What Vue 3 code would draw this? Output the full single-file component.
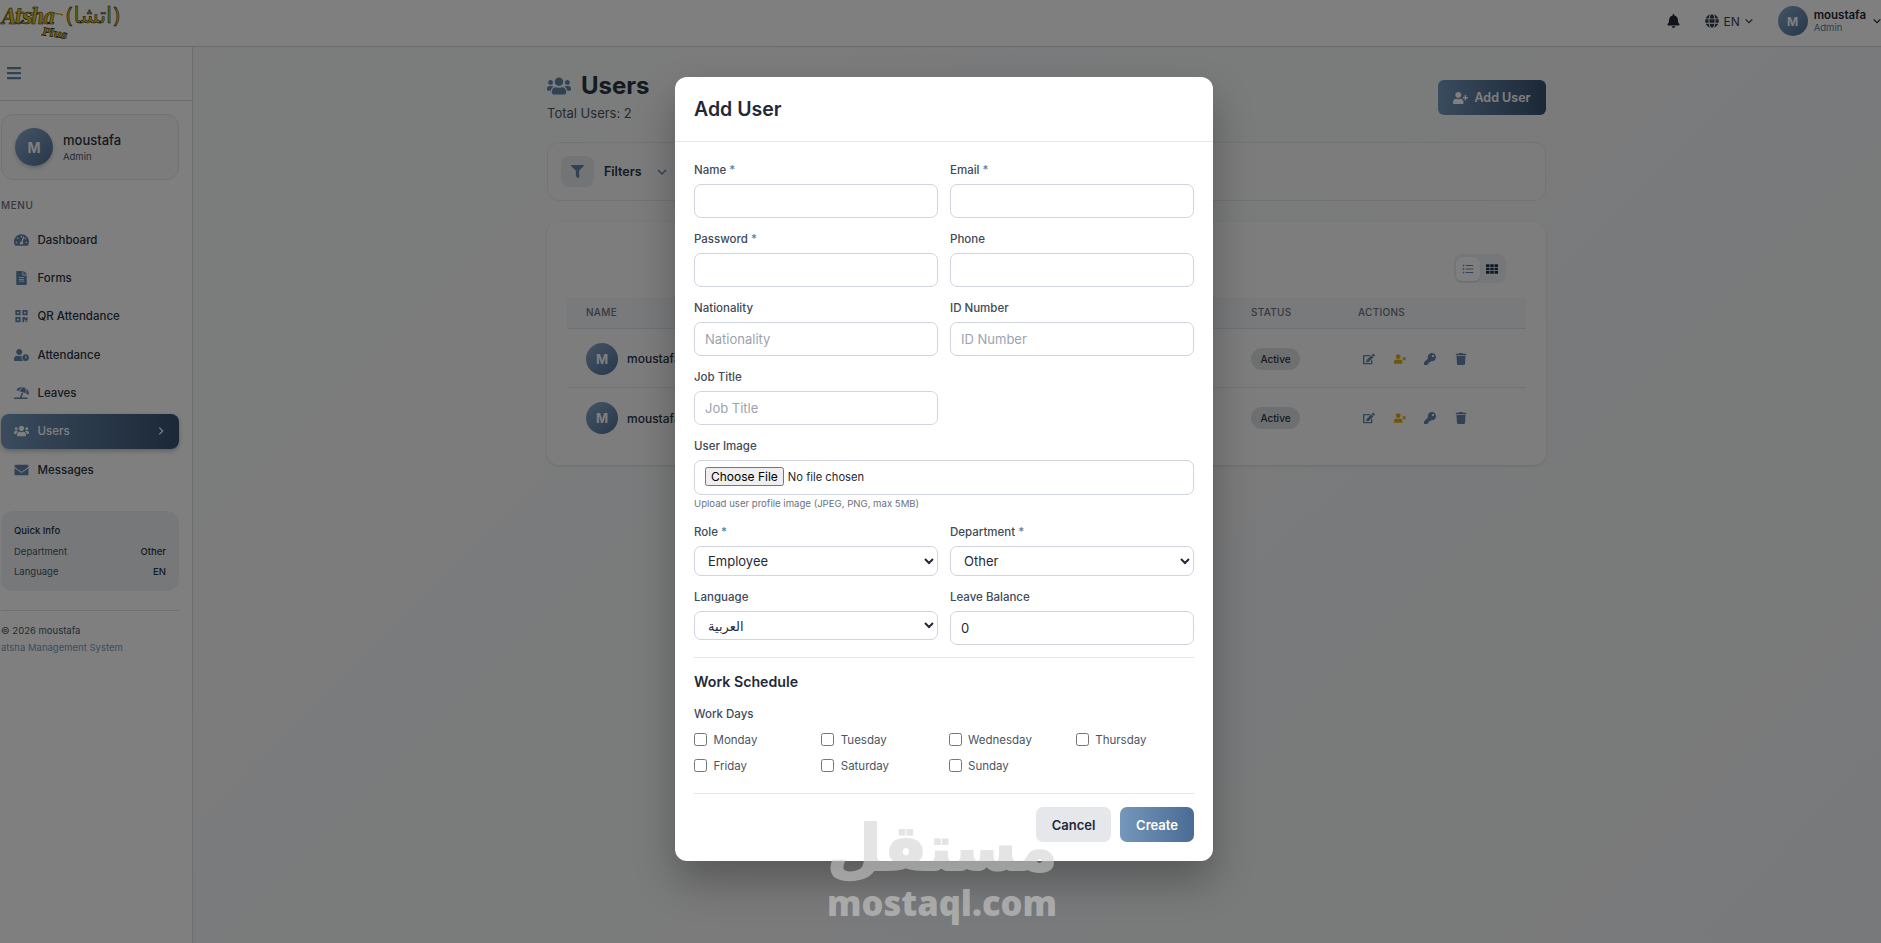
<script setup>
// icon paths: [viewBox width, d]
const icons = {
  bars: [448, 'M16 132h416c8.837 0 16-7.163 16-16V76c0-8.837-7.163-16-16-16H16C7.163 60 0 67.163 0 76v40c0 8.837 7.163 16 16 16zm0 160h416c8.837 0 16-7.163 16-16v-40c0-8.837-7.163-16-16-16H16c-8.837 0-16 7.163-16 16v40c0 8.837 7.163 16 16 16zm0 160h416c8.837 0 16-7.163 16-16v-40c0-8.837-7.163-16-16-16H16c-8.837 0-16 7.163-16 16v40c0 8.837 7.163 16 16 16z'],
  dashboard: [576, 'M288 32C128.94 32 0 160.94 0 320c0 52.8 14.25 102.26 39.06 144.8 5.61 9.62 16.3 15.2 27.44 15.2h443c11.14 0 21.83-5.58 27.44-15.2C561.75 422.26 576 372.8 576 320c0-159.06-128.94-288-288-288zm0 64c14.71 0 26.58 10.13 30.32 23.65-1.11 2.26-2.64 4.23-3.45 6.67l-9.22 27.67c-5.13 3.49-10.97 6.01-17.64 6.01-17.67 0-32-14.33-32-32S270.33 96 288 96zM96 384c-17.67 0-32-14.33-32-32s14.33-32 32-32 32 14.33 32 32-14.33 32-32 32zm48-160c-17.67 0-32-14.33-32-32s14.33-32 32-32 32 14.33 32 32-14.33 32-32 32zm246.77-72.41l-61.33 184C343.13 347.33 352 364.54 352 384c0 11.72-3.38 22.55-8.88 32H232.88c-5.5-9.45-8.88-20.28-8.88-32 0-33.94 26.5-61.43 59.9-63.59l61.34-184.01c4.17-12.56 17.73-19.45 30.36-15.17 12.57 4.19 19.35 17.79 15.17 30.36zm14.66 57.2l15.52-46.55c3.47-1.29 7.13-2.23 11.05-2.23 17.67 0 32 14.33 32 32s-14.33 32-32 32c-11.38-.01-20.89-6.28-26.57-15.22zM480 384c-17.67 0-32-14.33-32-32s14.33-32 32-32 32 14.33 32 32-14.33 32-32 32z'],
  file: [384, 'M224 136V0H24C10.7 0 0 10.7 0 24v464c0 13.3 10.7 24 24 24h336c13.3 0 24-10.7 24-24V160H248c-13.2 0-24-10.8-24-24zm64 236c0 6.6-5.4 12-12 12H108c-6.6 0-12-5.4-12-12v-8c0-6.6 5.4-12 12-12h168c6.6 0 12 5.4 12 12v8zm0-64c0 6.6-5.4 12-12 12H108c-6.6 0-12-5.4-12-12v-8c0-6.6 5.4-12 12-12h168c6.6 0 12 5.4 12 12v8zm0-72v8c0 6.6-5.4 12-12 12H108c-6.6 0-12-5.4-12-12v-8c0-6.6 5.4-12 12-12h168c6.6 0 12 5.4 12 12zm96-114.1v6.1H256V0h6.1c6.4 0 12.5 2.5 17 7l97.9 98c4.5 4.5 7 10.6 7 16.9z'],
  qrcode: [448, 'M0 224h192V32H0v192zM64 96h64v64H64V96zm192-64v192h192V32H256zm128 128h-64V96h64v64zM0 480h192V288H0v192zm64-128h64v64H64v-64zm352-64h32v128h-96v-32h-32v96h-64V288h96v32h64v-32zm0 160h32v32h-32v-32zm-64 0h32v32h-32v-32z'],
  userClock: [640, 'M496 224c-79.6 0-144 64.4-144 144s64.4 144 144 144 144-64.4 144-144-64.4-144-144-144zm64 150.3c0 5.3-4.4 9.7-9.7 9.7h-60.6c-5.3 0-9.7-4.4-9.7-9.7v-76.6c0-5.3 4.4-9.7 9.7-9.7h12.6c5.3 0 9.7 4.4 9.7 9.7V352h38.3c5.3 0 9.7 4.4 9.7 9.7v12.6zM320 368c0-27.8 6.7-54.1 18.2-77.5-8-1.5-16.2-2.5-24.6-2.5h-16.7c-22.2 10.2-46.9 16-72.9 16s-50.6-5.8-72.9-16h-16.7C60.2 288 0 348.2 0 422.4V464c0 26.5 21.5 48 48 48h347.1c-45.3-31.9-75.1-84.5-75.1-144zm-96-112c70.7 0 128-57.3 128-128S294.7 0 224 0 96 57.3 96 128s57.3 128 128 128z'],
  beach: [640, 'M115.38 136.9l102.11 37.18c35.19-81.54 86.21-144.29 139-173.7-95.88-4.89-188.78 36.96-248.53 111.8-6.69 8.4-2.66 21.05 7.42 24.72zm132.25 48.16l238.48 86.83c35.76-121.38 18.7-231.66-42.63-253.98-7.4-2.7-15.13-4-23.09-4-58.02.01-128.27 69.17-172.76 171.15zM521.48 60.5c6.22 16.3 10.83 34.6 13.2 55.19 5.74 49.89-1.42 108.23-18.95 166.98l102.62 37.36c10.09 3.67 21.31-3.43 21.57-14.17 2.32-95.69-41.91-187.44-118.44-245.36zM560 447.98H321.06L386 269.5l-60.14-21.9-72.9 200.37H16c-8.84 0-16 7.16-16 16.01v32.01C0 504.83 7.16 512 16 512h544c8.84 0 16-7.17 16-16.01v-32.01c0-8.84-7.16-16-16-16z'],
  users: [640, 'M96 224c35.3 0 64-28.7 64-64s-28.7-64-64-64-64 28.7-64 64 28.7 64 64 64zm448 0c35.3 0 64-28.7 64-64s-28.7-64-64-64-64 28.7-64 64 28.7 64 64 64zm32 32h-64c-17.6 0-33.5 7.1-45.1 18.6 40.3 22.1 68.9 62 75.1 109.4h66c17.7 0 32-14.3 32-32v-32c0-35.3-28.7-64-64-64zm-256 0c61.9 0 112-50.1 112-112S381.9 32 320 32 208 82.1 208 144s50.1 112 112 112zm76.8 32h-8.3c-20.8 10-43.9 16-68.5 16s-47.6-6-68.5-16h-8.3C179.6 288 128 339.6 128 403.2V432c0 26.5 21.5 48 48 48h288c26.5 0 48-21.5 48-48v-28.8c0-63.6-51.6-115.2-115.2-115.2zm-223.7-13.4C161.5 263.1 145.6 256 128 256H64c-35.3 0-64 28.7-64 64v32c0 17.7 14.3 32 32 32h65.9c6.3-47.4 34.9-87.3 75.2-109.4z'],
  envelope: [512, 'M502.3 190.8c3.9-3.1 9.7-.2 9.7 4.7V400c0 26.5-21.5 48-48 48H48c-26.5 0-48-21.5-48-48V195.6c0-5 5.7-7.8 9.7-4.7 22.4 17.4 52.1 39.5 154.1 113.6 21.1 15.4 56.7 47.8 92.2 47.6 35.7.3 72-32.8 92.3-47.6 102-74.1 131.6-96.3 154-113.7zM256 320c23.2.4 56.6-29.2 73.4-41.4 132.7-96.3 142.8-104.7 173.4-128.7 5.8-4.5 9.2-11.5 9.2-18.9v-19c0-26.5-21.5-48-48-48H48C21.5 64 0 85.5 0 112v19c0 7.4 3.4 14.3 9.2 18.9 30.6 23.9 40.7 32.4 173.4 128.7 16.8 12.2 50.2 41.8 73.4 41.4z'],
  bell: [448, 'M224 512c35.32 0 63.97-28.65 63.97-64H160.03c0 35.35 28.65 64 63.97 64zm215.39-149.71c-19.32-20.76-55.47-51.99-55.47-154.29 0-77.7-54.48-139.9-127.94-155.16V32c0-17.67-14.32-32-31.98-32s-31.98 14.33-31.98 32v20.84C118.56 68.1 64.08 130.3 64.08 208c0 102.3-36.15 133.53-55.47 154.29-6 6.45-8.66 14.16-8.61 21.71.11 16.4 12.98 32 32.1 32h383.8c19.12 0 32-15.6 32.1-32 .05-7.55-2.61-15.27-8.61-21.71z'],
  globe: [496, 'M336.5 160C322 70.7 287.8 8 248 8s-74 62.7-88.5 152h177zM152 256c0 22.2 1.2 43.5 3.3 64h185.3c2.1-20.5 3.3-41.8 3.3-64s-1.2-43.5-3.3-64H155.3c-2.1 20.5-3.3 41.8-3.3 64zm324.7-96c-28.6-67.9-86.5-120.4-158-141.6 24.4 33.8 41.2 84.7 50 141.6h108zM177.2 18.4C105.8 39.6 47.8 92.1 19.3 160h108c8.7-56.9 25.5-107.8 49.9-141.6zM487.4 192H372.7c2.1 21 3.3 42.5 3.3 64s-1.2 43-3.3 64h114.6c5.5-20.5 8.6-41.8 8.6-64s-3.1-43.5-8.5-64zM120 256c0-21.5 1.2-43 3.3-64H8.6C3.2 212.5 0 233.8 0 256s3.2 43.5 8.6 64h114.6c-2-21-3.2-42.5-3.2-64zm39.5 96c14.5 89.3 48.7 152 88.5 152s74-62.7 88.5-152h-177zm159.3 141.6c71.4-21.2 129.4-73.7 158-141.6h-108c-8.8 56.9-25.6 107.8-50 141.6zM19.3 352c28.6 67.9 86.5 120.4 158 141.6-24.4-33.8-41.2-84.7-50-141.6h-108z'],
  filter: [512, 'M487.976 0H24.028C2.71 0-8.047 25.866 7.058 40.971L192 225.941V432c0 7.831 3.821 15.17 10.237 19.662l80 55.98C298.02 518.69 320 507.493 320 487.98V225.941l184.947-184.97C520.021 25.896 509.338 0 487.976 0z'],
  list: [512, 'M32 72h64v64H32zM32 224h64v64H32zM32 376h64v64H32zM160 84h320v40H160zM160 236h320v40H160zM160 388h320v40H160z'],
  grid: [512, 'M0 56h150v112H0zM181 56h150v112H181zM362 56h150v112H362zM0 200h150v112H0zM181 200h150v112H181zM362 200h150v112H362zM0 344h150v112H0zM181 344h150v112H181zM362 344h150v112H362z'],
  edit: [576, 'M402.6 83.2l90.2 90.2c3.8 3.8 3.8 10 0 13.8L274.4 405.6l-92.8 10.3c-12.4 1.4-22.9-9.1-21.5-21.5l10.3-92.8L388.8 83.2c3.8-3.8 10-3.8 13.8 0zm162-22.9l-48.8-48.8c-15.2-15.2-39.9-15.2-55.2 0l-35.4 35.4c-3.8 3.8-3.8 10 0 13.8l90.2 90.2c3.8 3.8 10 3.8 13.8 0l35.4-35.4c15.2-15.3 15.2-40 0-55.2zM384 346.2V448H64V128h229.8c3.2 0 6.2-1.3 8.5-3.5l40-40c7.6-7.6 2.2-20.5-8.5-20.5H48C21.5 64 0 85.5 0 112v352c0 26.5 21.5 48 48 48h352c26.5 0 48-21.5 48-48V306.2c0-10.7-12.9-16-20.5-8.5l-40 40c-2.2 2.3-3.5 5.3-3.5 8.5z'],
  userTimes: [640, 'M589.6 240l45.6-45.6c6.3-6.3 6.3-16.5 0-22.8l-22.8-22.8c-6.3-6.3-16.5-6.3-22.8 0L544 194.4l-45.6-45.6c-6.3-6.3-16.5-6.3-22.8 0l-22.8 22.8c-6.3 6.3-6.3 16.5 0 22.8l45.6 45.6-45.6 45.6c-6.3 6.3-6.3 16.5 0 22.8l22.8 22.8c6.3 6.3 16.5 6.3 22.8 0l45.6-45.6 45.6 45.6c6.3 6.3 16.5 6.3 22.8 0l22.8-22.8c6.3-6.3 6.3-16.5 0-22.8L589.6 240zM224 256c70.7 0 128-57.3 128-128S294.7 0 224 0 96 57.3 96 128s57.3 128 128 128zm89.6 32h-16.7c-22.2 10.2-46.9 16-72.9 16s-50.6-5.8-72.9-16h-16.7C60.2 288 0 348.2 0 422.4V464c0 26.5 21.5 48 48 48h352c26.5 0 48-21.5 48-48v-41.6c0-74.2-60.2-134.4-134.4-134.4z'],
  userPlus: [640, 'M624 208h-64v-64c0-8.8-7.2-16-16-16h-32c-8.8 0-16 7.2-16 16v64h-64c-8.8 0-16 7.2-16 16v32c0 8.8 7.2 16 16 16h64v64c0 8.8 7.2 16 16 16h32c8.8 0 16-7.2 16-16v-64h64c8.8 0 16-7.2 16-16v-32c0-8.8-7.2-16-16-16zm-400 48c70.7 0 128-57.3 128-128S294.7 0 224 0 96 57.3 96 128s57.3 128 128 128zm89.6 32h-16.7c-22.2 10.2-46.9 16-72.9 16s-50.6-5.8-72.9-16h-16.7C60.2 288 0 348.2 0 422.4V464c0 26.5 21.5 48 48 48h352c26.5 0 48-21.5 48-48v-41.6c0-74.2-60.2-134.4-134.4-134.4z'],
  key: [512, 'M512 176.001C512 273.203 433.202 352 336 352c-11.22 0-22.19-1.062-32.827-3.069l-24.012 27.014A23.999 23.999 0 0 1 261.223 384H224v40c0 13.255-10.745 24-24 24h-40v40c0 13.255-10.745 24-24 24H24c-13.255 0-24-10.745-24-24v-78.059c0-6.365 2.529-12.47 7.029-16.971l161.802-161.802C163.108 213.814 160 195.271 160 176 160 78.798 238.797.001 335.999 0 433.488-.001 512 78.511 512 176.001zM336 128c0 26.51 21.49 48 48 48s48-21.49 48-48-21.49-48-48-48-48 21.49-48 48z'],
  trash: [448, 'M432 32H312l-9.4-18.7A24 24 0 0 0 281.1 0H166.8a23.72 23.72 0 0 0-21.4 13.3L136 32H16A16 16 0 0 0 0 48v32a16 16 0 0 0 16 16h416a16 16 0 0 0 16-16V48a16 16 0 0 0-16-16zM53.2 467a48 48 0 0 0 47.9 45h245.8a48 48 0 0 0 47.9-45L416 128H32z']
}

const menu = [
  { label: 'Dashboard', icon: 'dashboard' },
  { label: 'Forms', icon: 'file' },
  { label: 'QR Attendance', icon: 'qrcode' },
  { label: 'Attendance', icon: 'userClock' },
  { label: 'Leaves', icon: 'beach' },
  { label: 'Users', icon: 'users', active: true },
  { label: 'Messages', icon: 'envelope' }
]

const rows = [1, 2]
const rowActions = [
  { icon: 'edit', cls: 'a-blue' },
  { icon: 'userTimes', cls: 'a-gold' },
  { icon: 'key', cls: 'a-blue' },
  { icon: 'trash', cls: 'a-blue' }
]

const days = ['Monday', 'Tuesday', 'Wednesday', 'Thursday', 'Friday', 'Saturday', 'Sunday']
</script>

<template>
  <div class="page">
    <header class="topbar">
      <div class="logo">
        <span class="logo-latin">Atsha</span>
        <svg class="logo-flourish" viewBox="0 0 20 6"><path d="M1 4c5-3 12-3 18-1" /></svg>
        <span class="logo-plus">Plus</span>
        <span class="logo-ar">(اتشا)</span>
      </div>
      <div class="top-right">
        <svg class="ic bell" :viewBox="`0 0 ${icons.bell[0]} 512`"><path :d="icons.bell[1]" /></svg>
        <div class="lang">
          <svg class="ic globe" :viewBox="`0 0 ${icons.globe[0]} 512`"><path :d="icons.globe[1]" /></svg>
          <span>EN</span>
          <svg class="chev" viewBox="0 0 12 12"><path d="M2 4l4 4 4-4" /></svg>
        </div>
        <div class="top-user">
          <div class="avatar avatar-top">M</div>
          <div class="top-user-text">
            <div class="top-name">moustafa</div>
            <div class="top-role">Admin</div>
          </div>
          <svg class="chev" viewBox="0 0 12 12"><path d="M2 4l4 4 4-4" /></svg>
        </div>
      </div>
    </header>

    <div class="layout">
      <aside class="sidebar">
        <div class="side-top">
          <svg class="ic burger" :viewBox="`0 0 ${icons.bars[0]} 512`"><path :d="icons.bars[1]" /></svg>
        </div>
        <div class="side-inner">
          <div class="user-card">
            <div class="avatar avatar-card">M</div>
            <div>
              <div class="card-name">moustafa</div>
              <div class="card-role">Admin</div>
            </div>
          </div>
          <div class="menu-title">MENU</div>
          <nav class="menu">
            <div v-for="item in menu" :key="item.label" class="menu-item" :class="{ active: item.active }">
              <span class="menu-icon">
                <svg class="ic" :viewBox="`0 0 ${icons[item.icon][0]} 512`"><path :d="icons[item.icon][1]" /></svg>
              </span>
              <span class="menu-label">{{ item.label }}</span>
              <svg v-if="item.active" class="chev-right" viewBox="0 0 12 12"><path d="M4 2l4 4-4 4" /></svg>
            </div>
          </nav>
          <div class="quick">
            <div class="quick-title">Quick Info</div>
            <div class="quick-row"><span>Department</span><b>Other</b></div>
            <div class="quick-row"><span>Language</span><b>EN</b></div>
          </div>
          <div class="side-foot">
            <div class="copy">© 2026 moustafa</div>
            <div class="system">atsha Management System</div>
          </div>
        </div>
      </aside>

      <main class="main">
        <div class="content">
          <div class="page-head">
            <div>
              <h1 class="page-title">
                <svg class="ic" :viewBox="`0 0 ${icons.users[0]} 512`"><path :d="icons.users[1]" /></svg>
                Users
              </h1>
              <div class="page-sub">Total Users: 2</div>
            </div>
            <button class="add-btn">
              <svg class="ic" :viewBox="`0 0 ${icons.userPlus[0]} 512`"><path :d="icons.userPlus[1]" /></svg>
              Add User
            </button>
          </div>

          <section class="filter-card">
            <span class="filter-box">
              <svg class="ic" :viewBox="`0 0 ${icons.filter[0]} 512`"><path :d="icons.filter[1]" /></svg>
            </span>
            <span class="filter-label">Filters</span>
            <svg class="chev" viewBox="0 0 12 12"><path d="M2 4l4 4 4-4" /></svg>
          </section>

          <section class="table-card">
            <div class="toggle-row">
              <div class="toggle">
                <span class="toggle-btn on">
                  <svg class="ic" viewBox="0 0 512 512"><path :d="icons.list[1]" /></svg>
                </span>
                <span class="toggle-btn">
                  <svg class="ic" viewBox="0 0 512 512"><path :d="icons.grid[1]" /></svg>
                </span>
              </div>
            </div>
            <div class="t-head t-grid">
              <span>NAME</span>
              <span>STATUS</span>
              <span>ACTIONS</span>
            </div>
            <div v-for="r in rows" :key="r" class="t-row t-grid">
              <div class="t-user">
                <div class="avatar avatar-row">M</div>
                <span>moustafa</span>
              </div>
              <div><span class="badge">Active</span></div>
              <div class="t-actions">
                <span v-for="a in rowActions" :key="a.icon" class="t-action" :class="a.cls">
                  <svg class="ic" :viewBox="`0 0 ${icons[a.icon][0]} 512`"><path :d="icons[a.icon][1]" /></svg>
                </span>
              </div>
            </div>
          </section>
        </div>
      </main>
    </div>

    <div class="overlay">
      <div class="modal">
        <div class="modal-head">
          <h2>Add User</h2>
        </div>
        <form class="modal-body" @submit.prevent>
          <div class="two">
            <div class="field">
              <label>Name <i>*</i></label>
              <input type="text" />
            </div>
            <div class="field">
              <label>Email <i>*</i></label>
              <input type="email" />
            </div>
            <div class="field">
              <label>Password <i>*</i></label>
              <input type="password" />
            </div>
            <div class="field">
              <label>Phone</label>
              <input type="text" />
            </div>
            <div class="field">
              <label>Nationality</label>
              <input type="text" placeholder="Nationality" />
            </div>
            <div class="field">
              <label>ID Number</label>
              <input type="text" placeholder="ID Number" />
            </div>
            <div class="field">
              <label>Job Title</label>
              <input type="text" placeholder="Job Title" />
            </div>
          </div>

          <div class="field image-field">
            <label>User Image</label>
            <input class="file" type="file" />
            <div class="hint">Upload user profile image (JPEG, PNG, max 5MB)</div>
          </div>

          <div class="two">
            <div class="field">
              <label>Role <i>*</i></label>
              <select><option>Employee</option></select>
            </div>
            <div class="field">
              <label>Department <i>*</i></label>
              <select><option>Other</option></select>
            </div>
            <div class="field">
              <label>Language</label>
              <select class="select-ar"><option>العربية</option></select>
            </div>
            <div class="field">
              <label>Leave Balance</label>
              <input type="number" value="0" />
            </div>
          </div>

          <div class="schedule">
            <h3>Work Schedule</h3>
            <label class="days-label">Work Days</label>
            <div class="days">
              <label v-for="d in days" :key="d" class="day">
                <input type="checkbox" />
                <span>{{ d }}</span>
              </label>
            </div>
          </div>

          <div class="modal-foot">
            <button type="button" class="btn-cancel">Cancel</button>
            <button type="button" class="btn-create">Create</button>
          </div>
        </form>
      </div>
    </div>

    <div class="watermark">
      <div class="wm-ar">مستقل</div>
      <div class="wm-en">mostaql.com</div>
    </div>
  </div>
</template>

<style>
html, body {
  margin: 0;
  background: #f4f6f7;
}
</style>

<style scoped>
.page {
  position: relative;
  width: 1881px;
  height: 943px;
  overflow: hidden;
  font-family: Inter, "Noto Sans", sans-serif;
  color: #2b3442;
  background: #f4f6f7;
}

.ic {
  display: block;
  fill: currentColor;
}

.chev {
  width: 10px;
  height: 10px;
  fill: none;
  stroke: currentColor;
  stroke-width: 1.5;
}

/* top bar */
.topbar {
  height: 46px;
  box-sizing: content-box;
  border-bottom: 1px solid #d4d6da;
  background: #fff;
  display: flex;
  justify-content: space-between;
  align-items: flex-start;
}

.logo {
  position: relative;
  width: 104px;
  height: 44px;
  color: #e4c21c;
  -webkit-text-stroke: 0.5px #14140c;
  font-family: "DejaVu Serif", serif;
  font-style: italic;
  font-weight: 700;
}

.logo-latin {
  position: absolute;
  left: 2px;
  top: 3px;
  font-size: 19px;
  letter-spacing: -1.6px;
  transform: scaleY(1.15);
  transform-origin: left top;
}

.logo-flourish {
  position: absolute;
  left: 44px;
  top: 12px;
  width: 20px;
  height: 6px;
  fill: none;
  stroke: #c9a818;
  stroke-width: 1.6;
}

.logo-plus {
  position: absolute;
  left: 42px;
  top: 27px;
  font-size: 11px;
  letter-spacing: -0.5px;
  transform: rotate(8deg);
}

.logo-ar {
  position: absolute;
  left: 65px;
  top: 1px;
  font-size: 22px;
  line-height: 30px;
  font-family: "DejaVu Sans", sans-serif;
  font-style: normal;
  font-weight: 400;
}

.top-right {
  display: flex;
  align-items: center;
  padding-top: 6px;
  color: #1f2937;
}

.bell {
  width: 13px;
  height: 14px;
  margin-right: 25px;
}

.lang {
  display: flex;
  align-items: center;
  gap: 4px;
  font-size: 12px;
  color: #374151;
  margin-right: 24px;
}

.globe {
  width: 14px;
  height: 14px;
}

.top-user {
  display: flex;
  align-items: center;
}

.top-user .chev {
  margin-left: 6px;
  margin-right: -1px;
}

.avatar {
  border-radius: 50%;
  background: linear-gradient(135deg, #8aa9c9, #4f6e96);
  color: #fff;
  font-weight: 700;
  display: flex;
  align-items: center;
  justify-content: center;
  flex-shrink: 0;
}

.avatar-top {
  width: 30px;
  height: 30px;
  font-size: 12px;
}

.top-user-text {
  margin-left: 6px;
}

.top-name {
  font-size: 11.5px;
  font-weight: 600;
  line-height: 14px;
}

.top-role {
  font-size: 9.5px;
  line-height: 12px;
  color: #5a7ba0;
}

/* sidebar */
.layout {
  display: flex;
  height: 896px;
}

.sidebar {
  width: 192px;
  flex-shrink: 0;
  box-sizing: content-box;
  border-right: 1px solid #d9dce0;
  background: #fff;
  overflow: hidden;
}

.side-top {
  height: 54px;
  border-bottom: 1px solid #d4d6da;
  box-sizing: border-box;
  display: flex;
  align-items: center;
  padding: 0 0 2px 7px;
  color: #6284ab;
}

.burger {
  width: 14px;
  height: 16px;
}

.side-inner {
  padding: 13px 13px 0 1px;
}

.user-card {
  height: 66px;
  box-sizing: border-box;
  border: 1px solid #e2e5ea;
  border-radius: 12px;
  background: #f8f9fb;
  display: flex;
  align-items: center;
  gap: 10px;
  padding-left: 13px;
}

.avatar-card {
  width: 38px;
  height: 38px;
  font-size: 14px;
  box-shadow: 0 2px 4px rgba(0, 0, 0, 0.2);
}

.card-name {
  font-size: 13px;
  font-weight: 500;
  line-height: 18px;
  margin-top: 1px;
}

.card-role {
  font-size: 9.5px;
  line-height: 14px;
  margin-top: 1px;
  color: #4b5563;
}

.menu-title {
  font-size: 10px;
  font-weight: 500;
  letter-spacing: 0.6px;
  line-height: 14px;
  color: #6b7280;
  margin-top: 18px;
  margin-bottom: 10px;
}

.menu-item {
  height: 35px;
  margin-bottom: 3.4px;
  border-radius: 8px;
  display: flex;
  align-items: center;
  font-size: 11.5px;
  font-weight: 500;
  color: #2b3442;
  padding-left: 13px;
  padding-right: 13px;
}

.menu-icon {
  width: 23.5px;
  color: #6284ab;
}

.menu-icon .ic {
  width: 15px;
  height: 14px;
}

.menu-label {
  flex: 1;
}

.menu-item.active {
  background: linear-gradient(90deg, #7497bb, #37506f);
  box-shadow: 0 2px 5px rgba(0, 0, 0, 0.25);
  color: #fff;
}

.menu-item.active .menu-icon {
  color: #fff;
}

.chev-right {
  width: 10px;
  height: 10px;
  fill: none;
  stroke: #fff;
  stroke-width: 1.5;
}

.quick {
  height: 80px;
  box-sizing: border-box;
  margin-top: 24px;
  padding: 12px 13px;
  border-radius: 12px;
  background: #eef1f5;
  font-size: 9.5px;
}

.quick-title {
  font-weight: 500;
  font-size: 9.5px;
  line-height: 16px;
  margin-bottom: 6px;
}

.quick-row {
  display: flex;
  justify-content: space-between;
  line-height: 14px;
  margin-bottom: 6px;
  color: #4b5563;
}

.quick-row b {
  font-weight: 500;
  color: #2b3442;
}

.side-foot {
  margin-top: 19px;
  border-top: 1px solid #dfe2e6;
  padding-top: 11px;
  font-size: 9.5px;
}

.copy {
  line-height: 17px;
  color: #4b5563;
}

.system {
  line-height: 17px;
  color: #7f99b8;
  white-space: nowrap;
}

/* page content */
.main {
  flex: 1;
  min-width: 0;
  padding: 24px 0 0 354px;
  background: linear-gradient(135deg, #f8f9fa, #f1f3f4);
}

.content {
  width: 999px;
}

.page-head {
  display: flex;
  justify-content: space-between;
  align-items: flex-start;
}

.page-title {
  margin: 0;
  display: flex;
  align-items: center;
  gap: 10px;
  font-size: 24px;
  font-weight: 700;
  line-height: 29px;
  color: #2b3442;
}

.page-title .ic {
  width: 24px;
  height: 20px;
  color: #6284ab;
}

.page-sub {
  font-size: 13px;
  line-height: 16px;
  margin-top: 5px;
  color: #4b5563;
}

.add-btn {
  display: flex;
  align-items: center;
  gap: 6px;
  width: 108px;
  height: 35px;
  margin-top: 9px;
  justify-content: center;
  border: none;
  border-radius: 6px;
  background: linear-gradient(90deg, #7497bb, #37506f);
  color: #fff;
  font: 600 12.5px Inter, sans-serif;
}

.add-btn .ic {
  width: 15px;
  height: 12px;
}

.filter-card {
  height: 59px;
  box-sizing: border-box;
  margin-top: 21px;
  padding-left: 13px;
  border: 1px solid #e5e7eb;
  border-radius: 12px;
  background: #f8f9fa;
  display: flex;
  align-items: center;
  color: #6284ab;
}

.filter-box {
  width: 33px;
  height: 31px;
  border-radius: 8px;
  background: #e6e9ed;
  display: flex;
  align-items: center;
  justify-content: center;
  margin-right: 10px;
}

.filter-box .ic {
  width: 13px;
  height: 13px;
}

.filter-label {
  font-size: 12.5px;
  font-weight: 600;
  color: #2b3442;
  margin-right: 14px;
}

.filter-card .chev {
  width: 12px;
  height: 12px;
}

.table-card {
  height: 243px;
  box-sizing: border-box;
  margin-top: 21px;
  padding: 32px 20px 0;
  border-radius: 12px;
  background: #fafbfc;
  box-shadow: 0 1px 3px rgba(0, 0, 0, 0.12);
}

.toggle-row {
  display: flex;
  justify-content: flex-end;
  padding-right: 20px;
  height: 29px;
  margin-bottom: 14px;
}

.toggle {
  display: flex;
  align-items: center;
  width: 52px;
  height: 29px;
  padding: 2px;
  box-sizing: border-box;
  border-radius: 8px;
  background: #eceff3;
}

.toggle-btn {
  width: 24px;
  height: 24px;
  border-radius: 6px;
  display: flex;
  align-items: center;
  justify-content: center;
  color: #1f3350;
}

.toggle-btn.on {
  background: #fff;
  color: #6284ab;
  box-shadow: 0 1px 2px rgba(0, 0, 0, 0.1);
}

.toggle-btn .ic {
  width: 12px;
  height: 12px;
}

.t-grid {
  display: grid;
  grid-template-columns: 665px 107px 1fr;
  padding-left: 19px;
  align-items: center;
}

.t-head {
  height: 32px;
  box-sizing: border-box;
  padding-bottom: 1px;
  background: #f3f5f7;
  border-bottom: 1px solid #dfe2e6;
  font-size: 10px;
  font-weight: 500;
  letter-spacing: 0.3px;
  color: #6b7280;
}

.t-row {
  height: 59px;
  box-sizing: border-box;
  padding-top: 1px;
  border-bottom: 1px solid #e3e5e9;
  font-size: 12px;
}

.t-row:last-child {
  border-bottom: none;
}

.t-user {
  display: flex;
  align-items: center;
  gap: 9px;
  font-weight: 500;
}

.avatar-row {
  width: 32px;
  height: 32px;
  font-size: 13px;
}

.badge {
  display: inline-block;
  width: 49px;
  height: 22px;
  line-height: 22px;
  text-align: center;
  border-radius: 11px;
  background: #dcdfe3;
  font-size: 10px;
  font-weight: 500;
  color: #2b3442;
  vertical-align: middle;
}

.t-actions {
  display: flex;
  gap: 18.5px;
  padding-left: 5px;
}

.t-action {
  width: 12px;
}

.t-action .ic {
  width: 12px;
  height: 12px;
}

.a-blue {
  color: #6284ab;
}

.a-gold {
  color: #e4ad10;
}

/* modal */
.overlay {
  position: absolute;
  inset: 0;
  display: flex;
  justify-content: center;
  align-items: flex-start;
  box-sizing: border-box;
  padding: 77px 0 0 7px;
  background: rgba(0, 0, 0, 0.5);
}

.modal {
  width: 538px;
  height: 784px;
  border-radius: 12px;
  background: #fff;
  box-shadow: 0 20px 40px rgba(0, 0, 0, 0.28);
}

.modal-head {
  height: 64px;
  box-sizing: content-box;
  border-bottom: 1px solid #e5e7eb;
  padding-left: 19px;
  display: flex;
  align-items: center;
}

.modal-head h2 {
  margin: 0;
  font-size: 19.5px;
  font-weight: 600;
  color: #1f2937;
}

.modal-body {
  padding: 20px 19px 0;
}

.two {
  display: grid;
  grid-template-columns: 244px 244px;
  column-gap: 12px;
  row-gap: 13px;
}

.field label,
.days-label {
  display: block;
  font-size: 11.5px;
  font-weight: 500;
  line-height: 16px;
  margin-bottom: 6px;
  color: #404a58;
}

.field label i {
  font-style: normal;
  color: #5a7ba0;
}

.field input,
.field select {
  display: block;
  width: 100%;
  box-sizing: border-box;
  border: 1px solid #d1d5e0;
  border-radius: 7px;
  background: #fff;
  font: 13px Inter, "DejaVu Sans", sans-serif;
  color: #1f2937;
}

.field input {
  height: 34px;
  padding: 0 10px;
}

.field input::placeholder {
  color: #9ca3af;
}

.field select {
  height: 30px;
  padding: 0 9px;
}

.field .select-ar {
  height: 29px;
}

.image-field {
  margin-top: 13px;
  margin-bottom: 14px;
}

.field .file {
  height: 35px;
  padding: 0 10px;
  font-size: 11.2px;
  line-height: 33px;
}

.field .file::file-selector-button {
  font: 12px Inter, sans-serif;
  height: 19px;
  padding: 0 4px;
  margin-right: 4px;
}

.hint {
  font-size: 9.6px;
  line-height: 12px;
  margin-top: 3px;
  color: #6b7280;
}

.schedule {
  margin-top: 12px;
  padding-top: 15px;
  border-top: 1px solid #e5e7eb;
}

.schedule h3 {
  margin: 0 0 15px;
  font-size: 14.2px;
  font-weight: 600;
  line-height: 18px;
  color: #1f2937;
}

.schedule .days-label {
  margin-bottom: 9.5px;
}

.days {
  display: grid;
  grid-template-columns: repeat(4, 1fr);
  column-gap: 9px;
  row-gap: 10px;
}

.day {
  display: flex;
  align-items: center;
  gap: 6.5px;
  height: 16px;
  font-size: 11.5px;
  color: #4b5563;
}

.day input {
  width: 13px;
  height: 13px;
  margin: 0;
}

.modal-foot {
  margin-top: 19.5px;
  padding-top: 13px;
  border-top: 1px solid #e5e7eb;
  display: flex;
  justify-content: flex-end;
  gap: 9px;
}

.modal-foot button {
  height: 35px;
  border: none;
  border-radius: 7px;
  font: 600 13px Inter, sans-serif;
}

.btn-cancel {
  width: 75px;
  background: #e5e7eb;
  color: #1f2937;
}

.btn-create {
  width: 74px;
  background: linear-gradient(90deg, #7497bb, #4a6b93);
  color: #fff;
}

/* watermark of the screenshot site, sits over everything */
.watermark {
  position: absolute;
  left: 827px;
  top: 813px;
  width: 225px;
  text-align: center;
  color: #d0d0d0;
  opacity: 0.57;
  pointer-events: none;
}

.wm-ar {
  font-family: "DejaVu Sans", sans-serif;
  font-weight: 700;
  font-size: 63px;
  line-height: 72px;
  white-space: nowrap;
  -webkit-text-stroke: 2px #d0d0d0;
}

.wm-en {
  font-family: "Open Sans", sans-serif;
  font-weight: 800;
  font-size: 34.5px;
  line-height: 36px;
  white-space: nowrap;
}
</style>
